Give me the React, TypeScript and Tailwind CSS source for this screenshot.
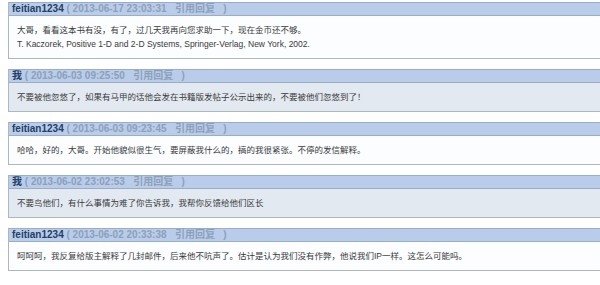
import React from 'react';

type Post = {
  user: string;
  time: string;
  lines: string[];
  shade: boolean;
};

const posts: Post[] = [
  {
    user: 'feitian1234',
    time: '2013-06-17 23:03:31',
    lines: [
      '大哥，看看这本书有没，有了，过几天我再向您求助一下，现在金币还不够。',
      'T. Kaczorek, Positive 1-D and 2-D Systems, Springer-Verlag, New York, 2002.',
    ],
    shade: false,
  },
  {
    user: '我',
    time: '2013-06-03 09:25:50',
    lines: ['不要被他忽悠了，如果有马甲的话他会发在书籍版发帖子公示出来的，不要被他们忽悠到了！'],
    shade: true,
  },
  {
    user: 'feitian1234',
    time: '2013-06-03 09:23:45',
    lines: ['哈哈，好的，大哥。开始他貌似很生气，要屏蔽我什么的，搞的我很紧张。不停的发信解释。'],
    shade: false,
  },
  {
    user: '我',
    time: '2013-06-02 23:02:53',
    lines: ['不要鸟他们，有什么事情为难了你告诉我，我帮你反馈给他们区长'],
    shade: true,
  },
  {
    user: 'feitian1234',
    time: '2013-06-02 20:33:38',
    lines: ['呵呵呵，我反复给版主解释了几封邮件，后来他不吭声了。估计是认为我们没有作弊，他说我们IP一样。这怎么可能吗。'],
    shade: false,
  },
];

function PostBox({ post }: { post: Post }) {
  return (
    <div className="ml-2 border-l border-b border-[#adb7bd]">
      <div className="h-[14px] border-t border-b border-[#9badc4] bg-[#b9cdea] pl-[3px] text-[10px] leading-[12px] font-bold whitespace-nowrap">
        <span className="text-[#233f66]">{post.user}</span>
        <span className="text-[#8d9fba]">
          {' ( ' + post.time + '\u00a0\u00a0 '}
          <span>引用回复</span>
          {'\u00a0\u00a0 )'}
        </span>
      </div>
      <div
        className={
          post.shade
            ? 'bg-[#e3e9f1] py-[7px] pl-2 text-[8.5px] leading-[14px] text-[#3a3a3a]'
            : 'bg-[#fbfdff] py-[7px] pl-2 text-[8.5px] leading-[14px] text-[#3a3a3a]'
        }
      >
        {post.lines.map((l, i) => (
          <div key={i} className="whitespace-nowrap">
            {l}
          </div>
        ))}
      </div>
    </div>
  );
}

export default function App() {
  return (
    <div
      className="w-[600px] h-[285px] overflow-hidden bg-white pt-[2px] flex flex-col gap-[10px]"
      style={{ fontFamily: '"Liberation Sans", "Noto Sans CJK SC", sans-serif' }}
    >
      {posts.map((p, i) => (
        <PostBox key={i} post={p} />
      ))}
    </div>
  );
}
